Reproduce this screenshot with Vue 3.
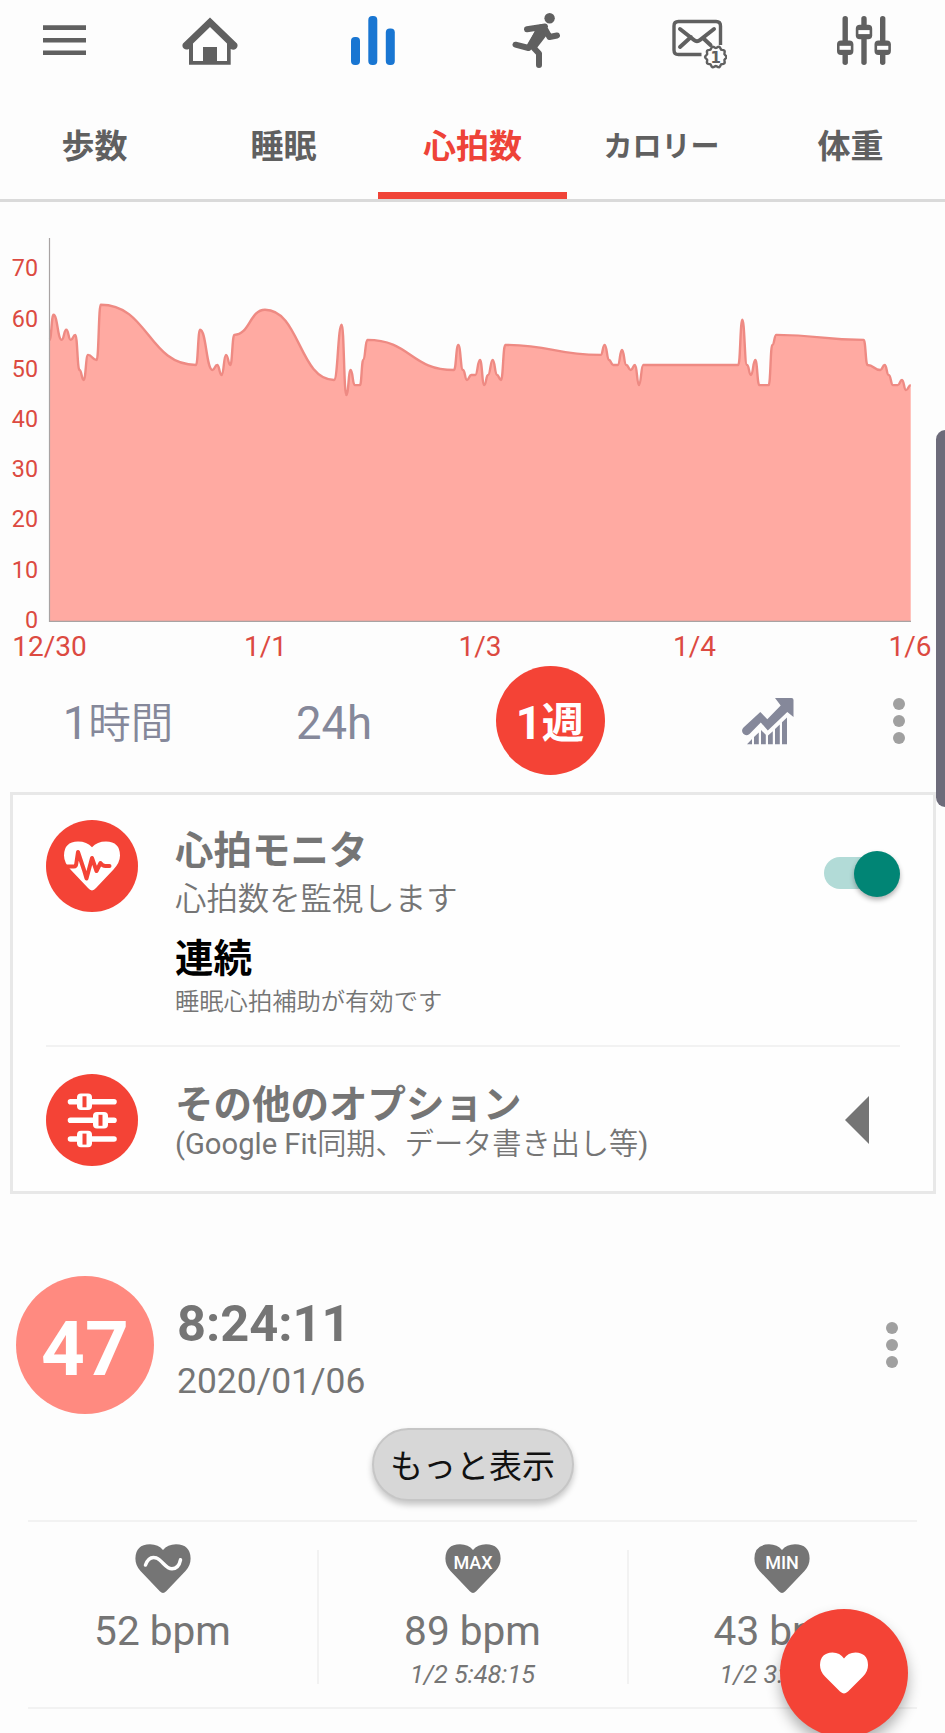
<template>
  <main class="screen">
    <nav class="toolbar">
      <button type="button" class="tool" aria-label="menu">
        <svg width="44" height="68" viewBox="0 0 44 68">
          <path d="M0 25.3h43v4.6H0zM0 38h43v4.6H0zM0 50.4h43V55H0z" />
        </svg>
      </button>
      <button type="button" class="tool" aria-label="home">
        <svg width="56" height="68" viewBox="0 0 56 68">
          <path d="M28 17.500 55 43.500q1.500 3-1 5.200-2.500 1.800-5.300.2V64.700H7V48.900q-3 1.400-5.200-.3-2.300-2.300-.8-5.100zM28 27 11 43.500V61h10V47h14v14h10V43.500z" fill-rule="evenodd" />
        </svg>
      </button>
      <button type="button" class="tool active" aria-label="stats">
        <svg width="44" height="68" viewBox="0 0 44 68">
          <rect x="0" y="37" width="9" height="28" rx="4" />
          <rect x="17.300" y="16" width="9" height="49" rx="4" />
          <rect x="34.800" y="28.500" width="9" height="36.500" rx="4" />
        </svg>
      </button>
      <button type="button" class="tool" aria-label="workout">
        <svg width="48" height="70" viewBox="0 0 48 70">
          <circle cx="37.600" cy="18.200" r="5.200" />
          <path d="M26 25.500q5-2.500 8 .5l2.500 7-12 15.500-9-3.500z" />
          <path d="M33 26.500 15 29.200M33 29l4.500 8 7.500-1.500M27 30 16.500 48 3.500 44.700M19 45l8 8.500V65" class="limb" />
        </svg>
      </button>
      <button type="button" class="tool" aria-label="messages">
        <svg width="55" height="70" viewBox="0 0 55 70">
          <path d="M29.500 54.500H6.500q-4.500 0-4.500-4.500V26q0-4.500 4.500-4.500H44q4.500 0 4.500 4.500v19" class="line" />
          <path d="m8 29 14 11q3 2.500 6 0l14-11M8 47l11-10M31 38l7.500 7" class="line thick" />
          <path :d="badgePath" class="line badge" />
          <text x="43.800" y="62.500" class="badge-text">1</text>
        </svg>
      </button>
      <button type="button" class="tool" aria-label="settings">
        <svg width="54" height="68" viewBox="0 0 54 68">
          <rect v-for="x in [5.5, 24.3, 43]" :key="x" :x="x" y="16" width="5.400" height="49" rx="2.700" />
          <g v-for="k in knobs" :key="k.x">
            <rect :x="k.x" :y="k.y" width="16.400" height="14.500" rx="4" />
            <rect :x="k.x + 2.6" :y="k.y + 5.3" width="11.200" height="4" fill="#fff" />
          </g>
        </svg>
      </button>
    </nav>

    <nav class="tabs">
      <button
        v-for="tab in tabs"
        :key="tab"
        type="button"
        class="tab"
        :class="{ active: tab === currentTab, kana: tab === 'カロリー' }"
        @click="currentTab = tab"
      >
        {{ tab }}
      </button>
    </nav>

    <svg class="chart" width="945" height="466" viewBox="0 202 945 466">
      <path :d="areaPath" class="area" />
      <path :d="linePath" class="curve" />
      <path d="M49.500 238V621.300H911" class="axis" />
      <text v-for="n in yTicks" :key="n" x="38" :y="627.8 - n * 5.02" class="y-label">{{ n }}</text>
      <text v-for="t in xTicks" :key="t.label" :x="t.x" y="655.600" class="x-label">{{ t.label }}</text>
    </svg>

    <section class="ranges">
      <button
        v-for="r in ranges"
        :key="r.num + r.text"
        type="button"
        class="range"
        :class="{ selected: range === r.num + r.text }"
        @click="range = r.num + r.text"
      >
        <span class="disc">{{ r.num }}<span class="unit">{{ r.text }}</span></span>
      </button>
      <button type="button" class="range" aria-label="trend">
        <svg class="trend" width="52" height="48" viewBox="0 0 52 48">
          <path d="M33 0h16.500Q51.500 0 51.500 2v17l-6.200-5-19.500 18.500-7-8L7.500 36q-3.500 2.500-6.200-.2-2.600-3.300.2-6.300L18.300 14l7 7.300L38.700 7.500z" />
          <path d="M5 46.300 10 41v5.300zM12 39l4.800-4.500v11.800H12zM19 32l4.800 4.800v9.500H19zM26 37.500l4.800-4.300v13.100H26zM33 31l4.800-4.500v19.800H33zM40 24.300l5-4.800v26.800h-5z" />
        </svg>
      </button>
      <span class="dots"><i></i><i></i><i></i></span>
    </section>

    <section class="card">
      <div class="row monitor">
        <span class="round">
          <svg width="92" height="92" viewBox="0 0 92 92">
            <path d="M46 70.500q-2-.2-4-2.500L24.500 49.500Q18 42.500 18 35.500 18 21.800 32 21.500q9 0 14 5.800 5-5.800 14-5.800 14 .3 14 14 0 7-6.500 14L50 68q-2 2.300-4 2.500z" fill="#fff" />
            <path d="M21 46.500h7q2 0 2.300-3L32 32l6 18 2.500 8.500L46 38l4.500 13 4-8q2 3 5 3h4" class="pulse" />
          </svg>
        </span>
        <div class="texts">
          <h2>心拍モニタ</h2>
          <p class="desc">心拍数を監視します</p>
          <p class="mode">連続</p>
          <p class="note">睡眠心拍補助が有効です</p>
        </div>
        <button type="button" class="switch" :class="{ on: monitorOn }" aria-label="心拍モニタ" @click="monitorOn = !monitorOn"></button>
      </div>
      <div class="row options">
        <span class="round">
          <svg width="92" height="92" viewBox="0 0 92 92">
            <path d="M24.500 27.700h43.500M24.500 46.300h43.500M24.500 65h43.500" stroke="#fff" stroke-width="5.600" stroke-linecap="round" />
            <g v-for="b in [{ x: 31, y: 19.5 }, { x: 47, y: 38 }, { x: 31, y: 56.8 }]" :key="b.y">
              <rect :x="b.x" :y="b.y" width="15" height="16.500" rx="4" fill="#fff" />
              <rect :x="b.x + 5.5" :y="b.y + 2.8" width="4" height="11" fill="#f44336" />
            </g>
          </svg>
        </span>
        <div class="texts">
          <h2>その他のオプション</h2>
          <p class="extra"><span class="latin">(Google Fit</span>同期、データ書き出し等<span class="latin">)</span></p>
        </div>
        <svg class="arrow" width="24" height="48" viewBox="0 0 24 48"><path d="M24 0v48L0 24z" /></svg>
      </div>
    </section>

    <section class="record">
      <span class="bpm">47</span>
      <div class="when">
        <strong>8:24:11</strong>
        <span>2020/01/06</span>
      </div>
      <span class="dots"><i></i><i></i><i></i></span>
    </section>

    <button type="button" class="more">もっと表示</button>

    <section class="stats">
      <div v-for="s in stats" :key="s.value" class="stat">
        <svg width="56" height="50" viewBox="0 0 56 50">
          <path d="M28 49q-1.500 0-3.200-1.800L5.500 27Q.4 21.500.4 14.500.6.500 15 .3q8.500.2 13 5.700Q32.500.5 41 .3q14.400.2 14.600 14.200 0 7-5.100 12.500L31.200 47.200Q29.500 49 28 49z" />
          <path v-if="!s.tag" d="M10.500 21q3.500-9.500 11-7c6 2.500 9.500 11 15.500 10.800 5-.3 7.500-4 8.500-9" class="wave" />
          <text v-else x="28" y="25.300" class="tag">{{ s.tag }}</text>
        </svg>
        <span class="value">{{ s.value }} bpm</span>
        <span class="at">{{ s.at }}</span>
      </div>
    </section>

    <span class="scroll-handle"></span>
    <button type="button" class="fab" aria-label="measure">
      <svg width="48" height="42" viewBox="0 0 48 42">
        <path d="M24 41.500q-1.500 0-4-2L5 24.500Q0 19.500 0 13 .3.800 12.500.500 20 .700 24 6.500 28 .700 35.500.500 47.700.800 48 13q0 6.500-5 11.500L28 39.500q-2.500 2-4 2z" />
      </svg>
    </button>
  </main>
</template>

<script setup>
import { computed, ref } from 'vue'

const tabs = ['歩数', '睡眠', '心拍数', 'カロリー', '体重']
const currentTab = ref('心拍数')
const range = ref('1週')
const monitorOn = ref(true)

const ranges = [
  { num: '1', text: '時間' },
  { num: '24h', text: '' },
  { num: '1', text: '週' },
]

const knobs = [
  { x: 0, y: 40.5 },
  { x: 18.8, y: 24.8 },
  { x: 37.5, y: 40.5 },
]

const stats = [
  { value: 52, tag: '', at: '' },
  { value: 89, tag: 'MAX', at: '1/2 5:48:15' },
  { value: 43, tag: 'MIN', at: '1/2 3:48:15' },
]

const yTicks = [0, 10, 20, 30, 40, 50, 60, 70]
const xTicks = [
  { x: 49.5, label: '12/30' },
  { x: 265.5, label: '1/1' },
  { x: 480, label: '1/3' },
  { x: 694.5, label: '1/4' },
  { x: 910, label: '1/6' },
]

// [x, bpm]
const samples = [
  [49.5, 56], [53.5, 61], [61.7, 56], [66.3, 58], [70.7, 56], [75.3, 57], [79.5, 50], [83.7, 48],
  [88, 53], [96.7, 52], [100.7, 63], [196, 51], [200, 58], [212.5, 50], [217.2, 51], [221.7, 49],
  [226, 53], [230.3, 51], [234.3, 57], [265, 62], [334, 48], [341.7, 59], [346.3, 45], [350.7, 50],
  [354.7, 47], [360, 47], [363.3, 52], [367.3, 56], [454, 50], [458.3, 55], [463, 50], [467, 48],
  [471.3, 49], [475.3, 49], [480, 52], [484.3, 47], [488, 49], [492.7, 52], [497, 49], [501, 48],
  [505.3, 55], [600.7, 53], [604.7, 55], [609, 52], [613.3, 51], [617.7, 51], [622, 54], [626.3, 51],
  [630.7, 50], [635, 51], [639, 47], [643.3, 51], [738.3, 51], [742.3, 60], [747, 51], [751, 49],
  [755.3, 52], [759.3, 47], [768.7, 47], [772.3, 55], [776.3, 57], [863.7, 56], [867.5, 51],
  [880.3, 50], [884.7, 51], [888.7, 49], [893, 47], [897.7, 47], [902, 48], [906, 46], [910.7, 47],
]

const toY = (bpm) => (621 - bpm * 5.02).toFixed(1)

const linePath = computed(() => samples.reduce((d, [x, bpm], i) => {
  if (i === 0) return `M${x} ${toY(bpm)}`
  const [px, pBpm] = samples[i - 1]
  const mid = ((px + x) / 2).toFixed(1)
  return `${d}C${mid} ${toY(pBpm)} ${mid} ${toY(bpm)} ${x} ${toY(bpm)}`
}, ''))

const areaPath = computed(() => `${linePath.value}V621H49.5Z`)

// scalloped ring around the unread counter
const badgePath = computed(() => {
  let d = ''
  for (let i = 0; i <= 60; i++) {
    const a = (i / 60) * Math.PI * 2
    const r = 9.9 + 0.8 * Math.cos(a * 10)
    d += `${i ? 'L' : 'M'}${(43.8 + r * Math.cos(a)).toFixed(2)} ${(57 + r * Math.sin(a)).toFixed(2)}`
  }
  return d + 'Z'
})
</script>

<style>
body {
  margin: 0;
  background: #fdfdfd;
}
</style>

<style scoped>
.screen {
  position: relative;
  width: 945px;
  height: 1733px;
  overflow: hidden;
  background: #fdfdfd;
  color: #757575;
  font-family: Roboto, 'Noto Sans CJK JP', sans-serif;
}

button {
  border: 0;
  padding: 0;
  background: none;
  color: inherit;
  font: inherit;
  cursor: pointer;
}

svg {
  display: block;
}

.toolbar {
  display: grid;
  grid-template-columns: 129px 162px 163px 163px 165px 163px;
  height: 105px;
  align-items: start;
}

.tool {
  display: flex;
  justify-content: center;
  fill: #606060;
}

.tool.active {
  fill: #1976d2;
}

.limb {
  fill: none;
  stroke: #606060;
  stroke-width: 6;
  stroke-linecap: round;
  stroke-linejoin: round;
}

.line {
  fill: none;
  stroke: #606060;
  stroke-width: 3.4;
}

.thick {
  stroke-width: 4;
  stroke-linecap: round;
}

.badge {
  fill: #fdfdfd;
  stroke-width: 2.4;
}

.badge-text {
  font-size: 15px;
  font-weight: 700;
  font-family: 'DejaVu Sans', sans-serif;
  text-anchor: middle;
}

.tabs {
  display: flex;
  height: 94px;
  border-bottom: 3px solid #dadada;
}

.tab {
  flex: 1;
  box-sizing: border-box;
  height: 94px;
  padding-bottom: 3px;
  border-bottom: 7px solid transparent;
  font-size: 33px;
  font-weight: 700;
  line-height: 84px;
  color: #606060;
}

.tab.kana {
  font-size: 29px;
}

.tab.active {
  color: #ee4338;
  border-bottom-color: #f04438;
}

.chart {
  margin-bottom: -8px;
}

.area {
  fill: #ffaaa2;
}

.curve {
  fill: none;
  stroke: #ee8a83;
  stroke-width: 2.4;
  stroke-linejoin: round;
}

.axis {
  fill: none;
  stroke: #a8a3a3;
  stroke-width: 1.2;
}

.y-label,
.x-label {
  fill: #dc4a41;
  font-size: 23.3px;
  text-anchor: end;
}

.x-label {
  font-size: 28px;
  text-anchor: middle;
}

.ranges {
  display: grid;
  grid-template-columns: repeat(4, 216px) 1fr;
  align-items: center;
  height: 121px;
  padding-left: 10px;
  color: #85889a;
}

.range {
  display: flex;
  justify-content: center;
}

.disc {
  width: 109px;
  height: 109px;
  border-radius: 50%;
  font-size: 45.5px;
  line-height: 115px;
  white-space: nowrap;
  display: flex;
  justify-content: center;
}

.unit {
  font-size: 42.5px;
  font-weight: 350;
}

.selected .disc {
  background: #f44336;
  color: #fff;
  font-weight: 700;
}

.selected .unit {
  font-weight: 700;
}

.trend {
  fill: #85889a;
  margin: 2px 0 0 3px;
}

.dots {
  display: flex;
  flex-direction: column;
  gap: 5.3px;
  width: 12px;
}

.dots i {
  width: 12px;
  height: 12px;
  border-radius: 50%;
  background: #a0a0a0;
}

.ranges .dots {
  margin: 1px 0 0 19px;
}

.card {
  box-sizing: border-box;
  width: 926px;
  height: 402px;
  margin: 11px 0 0 10px;
  padding: 0 33px;
  border: 3px solid #e8e8e8;
  background: #fefefe;
}

.row {
  display: flex;
}

.monitor {
  box-sizing: border-box;
  height: 252px;
  padding-top: 25px;
  border-bottom: 2px solid #f2f2f2;
}

.options {
  padding-top: 27px;
}

.round {
  width: 92px;
  height: 92px;
  border-radius: 50%;
  background: #f44336;
}

.pulse {
  fill: none;
  stroke: #f44336;
  stroke-width: 4;
  stroke-linecap: round;
  stroke-linejoin: round;
}

.texts {
  flex: 1;
  padding-left: 37px;
  white-space: nowrap;
}

.texts h2,
.texts p {
  margin: 0;
}

.texts h2 {
  height: 51px;
  font-size: 38.5px;
  font-weight: 700;
  line-height: 62px;
}

.desc {
  height: 52px;
  font-size: 31.4px;
  font-weight: 350;
  line-height: 58px;
}

.mode {
  height: 50px;
  font-size: 38.5px;
  font-weight: 700;
  line-height: 71px;
  color: #000;
}

.note {
  font-size: 24.3px;
  font-weight: 350;
  line-height: 58px;
}

.options h2 {
  height: 45px;
}

.extra {
  font-size: 29.2px;
  font-weight: 350;
  line-height: 51px;
}

.latin {
  font-weight: 400;
}

.switch {
  width: 72px;
  height: 32px;
  margin-top: 37px;
  margin-right: 4px;
  border-radius: 16px;
  background: #d0d0d0;
}

.switch::after {
  content: '';
  display: block;
  width: 46px;
  height: 46px;
  margin: -6px 0 0 -3px;
  border-radius: 50%;
  background: #fafafa;
  box-shadow: 0 3px 5px rgba(0, 0, 0, 0.3);
}

.switch.on {
  background: #b2dbd7;
}

.switch.on::after {
  margin-left: 30px;
  background: #018575;
}

.arrow {
  margin: 22px 31px 0 0;
  fill: #757575;
}

.record {
  display: flex;
  align-items: center;
  height: 138px;
  margin: 82px 47px 0 16px;
}

.bpm {
  width: 138px;
  height: 138px;
  border-radius: 50%;
  background: #ff8a80;
  color: #fff;
  font-size: 76.5px;
  font-weight: 700;
  line-height: 147px;
  text-align: center;
}

.when {
  flex: 1;
  display: flex;
  flex-direction: column;
  padding: 12px 0 0 23px;
}

.when strong {
  font-size: 50.6px;
  line-height: 60px;
}

.when span {
  font-size: 35.4px;
  line-height: 54px;
}

.more {
  display: block;
  box-sizing: border-box;
  width: 202px;
  height: 73px;
  margin: 14px auto 19px;
  padding-top: 5px;
  border: 2px solid #c6c6c6;
  border-radius: 37px;
  background: #d7d7d7;
  box-shadow: 0 4px 6px rgba(0, 0, 0, 0.22);
  color: #111;
  font-size: 33px;
  line-height: 64px;
  white-space: nowrap;
}

.stats {
  box-sizing: border-box;
  display: grid;
  grid-template-columns: 290px 310px 309px;
  height: 189px;
  margin: 0 28px;
  padding-top: 28px;
  border-top: 2px solid #f2f2f2;
  border-bottom: 2px solid #f2f2f2;
}

.stat {
  box-sizing: border-box;
  display: flex;
  flex-direction: column;
  align-items: center;
  height: 134px;
  margin-left: -1px;
  padding-right: 2px;
  border-left: 2px solid #f2f2f2;
}

.stat:first-child {
  border-left-color: transparent;
  padding-right: 22px;
}

.stat svg {
  margin-top: -6px;
  flex-shrink: 0;
  fill: #757575;
}

.wave {
  fill: none;
  stroke: #fff;
  stroke-width: 3.5;
  stroke-linecap: round;
}

.tag {
  fill: #fff;
  font-size: 18px;
  font-weight: 500;
  text-anchor: middle;
}

.value {
  flex-shrink: 0;
  margin-top: 13px;
  font-size: 40.6px;
  line-height: 48px;
}

.at {
  flex-shrink: 0;
  font-size: 25.3px;
  font-style: italic;
  line-height: 39px;
}

.scroll-handle {
  position: absolute;
  top: 430px;
  right: -10px;
  width: 19px;
  height: 377px;
  border-radius: 11px;
  background: #6d6b7a;
}

.fab {
  position: absolute;
  left: 780px;
  top: 1609px;
  width: 128px;
  height: 128px;
  display: flex;
  justify-content: center;
  align-items: center;
  border-radius: 50%;
  background: #f44336;
  fill: #fff;
  box-shadow: 0 8px 14px rgba(0, 0, 0, 0.3);
}
</style>
